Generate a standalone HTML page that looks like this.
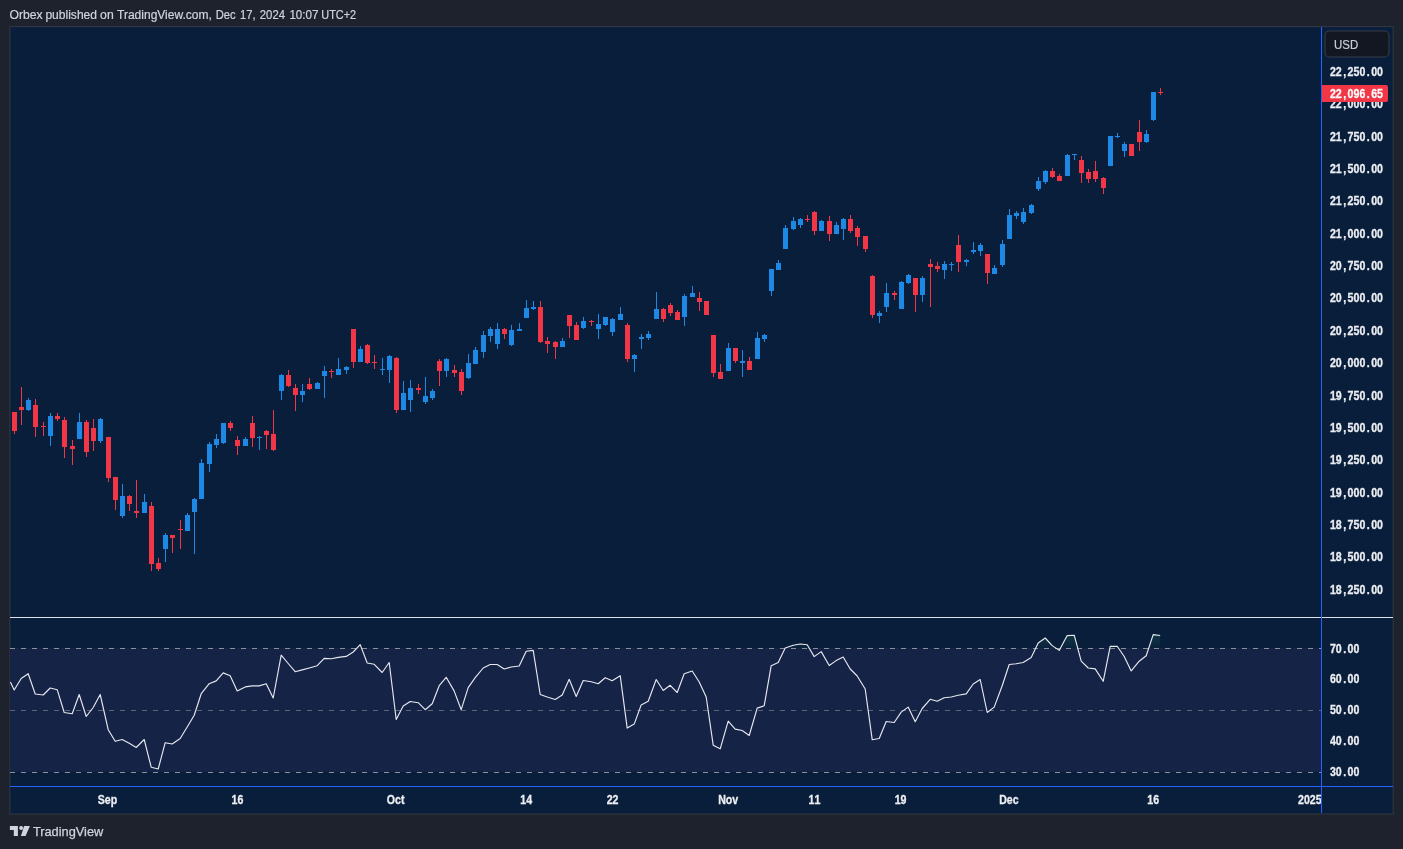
<!DOCTYPE html>
<html lang="en"><head><meta charset="utf-8"><title>Orbex published on TradingView.com</title>
<style>
html,body{margin:0;padding:0;background:#1e222d;}
body{width:1403px;height:849px;overflow:hidden;position:relative;font-family:"Liberation Sans", sans-serif;}
svg{position:absolute;left:0;top:0;display:block;will-change:transform;}
text{font-family:"Liberation Sans", sans-serif;}
.ax{font-size:12px;font-weight:bold;fill:#eceef2;stroke:#eceef2;stroke-width:0.3px;}
.tm{font-size:12px;font-weight:bold;fill:#eceef2;}
</style></head><body>
<svg width="1403" height="849" viewBox="0 0 1403 849">

<rect x="0" y="0" width="1403" height="849" fill="#1e222d"/>
<rect x="9.9" y="26.6" width="1383.25" height="787.4" fill="#091e3b" stroke="#343845" stroke-width="1"/>
<text y="18.8" font-size="12" fill="#d1d4dc" stroke="#d1d4dc" stroke-width="0.2"><tspan x="9.6" textLength="33.1" lengthAdjust="spacingAndGlyphs">Orbex</tspan> <tspan x="45.4" textLength="51.6" lengthAdjust="spacingAndGlyphs">published</tspan> <tspan x="100.1" textLength="13.6" lengthAdjust="spacingAndGlyphs">on</tspan> <tspan x="117.0" textLength="94.9" lengthAdjust="spacingAndGlyphs">TradingView.com,</tspan> <tspan x="215.7" textLength="19.9" lengthAdjust="spacingAndGlyphs">Dec</tspan> <tspan x="240.0" textLength="15.5" lengthAdjust="spacingAndGlyphs">17,</tspan> <tspan x="259.8" textLength="25.2" lengthAdjust="spacingAndGlyphs">2024</tspan> <tspan x="289.4" textLength="29.0" lengthAdjust="spacingAndGlyphs">10:07</tspan> <tspan x="321.3" textLength="34.9" lengthAdjust="spacingAndGlyphs">UTC+2</tspan></text>
<rect x="10" y="648" width="1311" height="124" fill="#152347"/>
<defs><linearGradient id="ob" x1="0" y1="632" x2="0" y2="648.5" gradientUnits="userSpaceOnUse"><stop offset="0" stop-color="#1f7a5c" stop-opacity="0.34"/><stop offset="1" stop-color="#1f7a5c" stop-opacity="0.02"/></linearGradient></defs>
<polygon fill="url(#ob)" points="356.3,648.5 360.0,644.6 361.5,648.5"/>
<polygon fill="url(#ob)" points="784.8,648.5 785.0,648.0 793.0,645.2 800.0,644.0 807.0,644.8 809.2,648.5"/>
<polygon fill="url(#ob)" points="1035.3,648.5 1038.0,643.0 1045.0,638.0 1052.0,645.6 1056.2,648.5"/>
<polygon fill="url(#ob)" points="1060.0,648.5 1067.0,635.6 1074.0,635.2 1077.6,648.5"/>
<polygon fill="url(#ob)" points="1109.6,648.5 1110.0,646.4 1117.0,646.2 1118.6,648.5"/>
<polygon fill="url(#ob)" points="1148.4,648.5 1153.0,634.6 1160.0,635.5 1160.0,648.5"/>
<line x1="10" y1="648.5" x2="1321" y2="648.5" stroke="#8b8f99" stroke-width="1" stroke-dasharray="5 6" shape-rendering="crispEdges"/>
<line x1="10" y1="710.5" x2="1321" y2="710.5" stroke="#5d6576" stroke-width="1" stroke-dasharray="5 6" shape-rendering="crispEdges"/>
<line x1="10" y1="772.5" x2="1321" y2="772.5" stroke="#8b8f99" stroke-width="1" stroke-dasharray="5 6" shape-rendering="crispEdges"/>
<polyline fill="none" stroke="#e6e8ee" stroke-width="1.15" stroke-linejoin="round" points="10.4,682.0 14.2,690.0 21.2,678.5 28.2,673.7 35.2,694.0 43.2,695.0 50.2,688.0 57.2,689.7 64.2,712.5 72.2,713.7 79.2,694.5 86.2,716.5 93.2,707.5 100.2,694.5 108.2,729.7 115.2,741.3 122.2,739.5 129.2,743.3 136.2,747.5 144.2,739.5 151.2,767.2 158.2,769.0 165.2,742.7 172.2,744.0 180.2,738.5 187.2,727.0 194.2,715.3 201.2,693.7 209.2,683.7 216.2,680.9 223.2,672.9 230.2,675.7 237.2,691.0 245.2,686.9 252.2,685.9 259.2,685.9 266.2,683.7 273.2,698.0 281.2,655.2 288.2,663.5 295.2,671.7 302.2,669.9 309.2,668.0 317.2,665.7 324.2,658.4 331.2,658.8 338.2,657.4 346.2,656.4 353.2,652.0 360.2,644.6 367.2,663.0 374.2,664.3 382.2,672.5 389.2,662.5 396.2,719.5 403.2,706.1 410.2,701.5 418.2,702.7 425.2,709.7 432.2,703.7 439.2,685.7 446.2,677.3 454.2,691.1 461.2,709.7 468.2,687.7 475.2,677.7 483.2,668.0 490.2,664.5 497.2,664.5 504.2,669.0 511.2,667.0 519.2,666.0 526.2,651.2 533.2,650.4 540.2,694.5 547.2,697.0 555.2,699.5 562.2,695.0 569.2,679.3 576.2,696.5 583.2,680.5 591.2,681.7 598.2,683.7 605.2,677.7 612.2,680.7 620.2,675.7 627.2,728.1 634.2,724.1 641.2,704.9 648.2,701.3 656.2,679.5 663.2,690.5 670.2,685.3 677.2,692.5 684.2,673.7 692.2,671.0 699.2,682.0 706.2,697.0 713.2,745.2 720.2,748.8 728.2,721.1 735.2,729.1 742.2,730.5 749.2,735.5 757.2,708.1 764.2,705.7 771.2,665.7 778.2,662.5 785.2,648.0 793.2,645.2 800.2,644.0 807.2,644.8 814.2,656.6 821.2,651.6 829.2,665.5 836.2,660.6 843.2,657.0 850.2,669.0 857.2,676.0 865.2,689.0 872.2,739.7 879.2,738.5 886.2,721.5 894.2,722.5 901.2,712.1 908.2,707.1 915.2,721.7 922.2,708.5 930.2,699.3 937.2,701.3 944.2,697.7 951.2,697.0 958.2,695.3 966.2,693.9 973.2,684.0 980.2,679.5 987.2,712.5 994.2,707.1 1002.2,685.7 1009.2,664.5 1016.2,663.7 1023.2,662.5 1031.2,657.4 1038.2,643.0 1045.2,638.0 1052.2,645.6 1059.2,650.4 1067.2,635.6 1074.2,635.2 1081.2,661.2 1088.2,668.0 1095.2,668.9 1103.2,681.3 1110.2,646.4 1117.2,646.2 1124.2,656.5 1131.2,670.9 1139.2,661.2 1146.2,655.8 1153.2,634.6 1160.2,635.5"/>
<g shape-rendering="crispEdges">
<rect x="14" y="412" width="1" height="22" fill="#f23645"/>
<rect x="12" y="412" width="5" height="19" fill="#f23645"/>
<rect x="21" y="387" width="1" height="38" fill="#f23645"/>
<rect x="19" y="407" width="5" height="3" fill="#f23645"/>
<rect x="28" y="398" width="1" height="13" fill="#1e88e5"/>
<rect x="26" y="400" width="5" height="10" fill="#1e88e5"/>
<rect x="35" y="399" width="1" height="38" fill="#f23645"/>
<rect x="33" y="405" width="5" height="22" fill="#f23645"/>
<rect x="43" y="422" width="1" height="14" fill="#f23645"/>
<rect x="41" y="426" width="5" height="1" fill="#f23645"/>
<rect x="50" y="413" width="1" height="33" fill="#1e88e5"/>
<rect x="48" y="416" width="5" height="20" fill="#1e88e5"/>
<rect x="57" y="413" width="1" height="8" fill="#f23645"/>
<rect x="55" y="416" width="5" height="3" fill="#f23645"/>
<rect x="64" y="417" width="1" height="41" fill="#f23645"/>
<rect x="62" y="420" width="5" height="27" fill="#f23645"/>
<rect x="72" y="440" width="1" height="25" fill="#f23645"/>
<rect x="70" y="446" width="5" height="3" fill="#f23645"/>
<rect x="79" y="413" width="1" height="26" fill="#1e88e5"/>
<rect x="77" y="422" width="5" height="17" fill="#1e88e5"/>
<rect x="86" y="420" width="1" height="37" fill="#f23645"/>
<rect x="84" y="422" width="5" height="30" fill="#f23645"/>
<rect x="93" y="419" width="1" height="32" fill="#f23645"/>
<rect x="91" y="428" width="5" height="13" fill="#f23645"/>
<rect x="100" y="418" width="1" height="25" fill="#1e88e5"/>
<rect x="98" y="419" width="5" height="22" fill="#1e88e5"/>
<rect x="108" y="437" width="1" height="45" fill="#f23645"/>
<rect x="106" y="437" width="5" height="41" fill="#f23645"/>
<rect x="115" y="477" width="1" height="33" fill="#f23645"/>
<rect x="113" y="477" width="5" height="23" fill="#f23645"/>
<rect x="122" y="484" width="1" height="34" fill="#1e88e5"/>
<rect x="120" y="496" width="5" height="20" fill="#1e88e5"/>
<rect x="129" y="495" width="1" height="16" fill="#f23645"/>
<rect x="127" y="496" width="5" height="8" fill="#f23645"/>
<rect x="136" y="480" width="1" height="38" fill="#f23645"/>
<rect x="134" y="511" width="5" height="2" fill="#f23645"/>
<rect x="144" y="494" width="1" height="19" fill="#1e88e5"/>
<rect x="142" y="502" width="5" height="11" fill="#1e88e5"/>
<rect x="151" y="502" width="1" height="69" fill="#f23645"/>
<rect x="149" y="506" width="5" height="58" fill="#f23645"/>
<rect x="158" y="558" width="1" height="13" fill="#f23645"/>
<rect x="156" y="563" width="5" height="6" fill="#f23645"/>
<rect x="165" y="533" width="1" height="29" fill="#1e88e5"/>
<rect x="163" y="535" width="5" height="14" fill="#1e88e5"/>
<rect x="172" y="535" width="1" height="18" fill="#f23645"/>
<rect x="170" y="535" width="5" height="3" fill="#f23645"/>
<rect x="180" y="520" width="1" height="29" fill="#f23645"/>
<rect x="178" y="529" width="5" height="1" fill="#f23645"/>
<rect x="187" y="513" width="1" height="18" fill="#1e88e5"/>
<rect x="185" y="515" width="5" height="16" fill="#1e88e5"/>
<rect x="194" y="498" width="1" height="56" fill="#1e88e5"/>
<rect x="192" y="499" width="5" height="13" fill="#1e88e5"/>
<rect x="201" y="459" width="1" height="40" fill="#1e88e5"/>
<rect x="199" y="463" width="5" height="36" fill="#1e88e5"/>
<rect x="209" y="442" width="1" height="30" fill="#1e88e5"/>
<rect x="207" y="444" width="5" height="20" fill="#1e88e5"/>
<rect x="216" y="434" width="1" height="14" fill="#1e88e5"/>
<rect x="214" y="439" width="5" height="6" fill="#1e88e5"/>
<rect x="223" y="423" width="1" height="21" fill="#1e88e5"/>
<rect x="221" y="423" width="5" height="20" fill="#1e88e5"/>
<rect x="230" y="421" width="1" height="10" fill="#f23645"/>
<rect x="228" y="423" width="5" height="5" fill="#f23645"/>
<rect x="237" y="436" width="1" height="19" fill="#f23645"/>
<rect x="235" y="440" width="5" height="6" fill="#f23645"/>
<rect x="245" y="437" width="1" height="9" fill="#1e88e5"/>
<rect x="243" y="439" width="5" height="7" fill="#1e88e5"/>
<rect x="252" y="416" width="1" height="31" fill="#f23645"/>
<rect x="250" y="423" width="5" height="15" fill="#f23645"/>
<rect x="259" y="436" width="1" height="14" fill="#1e88e5"/>
<rect x="257" y="437" width="5" height="1" fill="#1e88e5"/>
<rect x="266" y="430" width="1" height="19" fill="#f23645"/>
<rect x="264" y="431" width="5" height="4" fill="#f23645"/>
<rect x="273" y="410" width="1" height="41" fill="#f23645"/>
<rect x="271" y="434" width="5" height="16" fill="#f23645"/>
<rect x="281" y="374" width="1" height="26" fill="#1e88e5"/>
<rect x="279" y="375" width="5" height="16" fill="#1e88e5"/>
<rect x="288" y="370" width="1" height="17" fill="#f23645"/>
<rect x="286" y="375" width="5" height="11" fill="#f23645"/>
<rect x="295" y="384" width="1" height="27" fill="#f23645"/>
<rect x="293" y="388" width="5" height="7" fill="#f23645"/>
<rect x="302" y="384" width="1" height="18" fill="#1e88e5"/>
<rect x="300" y="391" width="5" height="4" fill="#1e88e5"/>
<rect x="309" y="378" width="1" height="12" fill="#f23645"/>
<rect x="307" y="384" width="5" height="5" fill="#f23645"/>
<rect x="317" y="382" width="1" height="7" fill="#1e88e5"/>
<rect x="315" y="383" width="5" height="6" fill="#1e88e5"/>
<rect x="324" y="366" width="1" height="32" fill="#1e88e5"/>
<rect x="322" y="371" width="5" height="5" fill="#1e88e5"/>
<rect x="331" y="369" width="1" height="9" fill="#f23645"/>
<rect x="329" y="371" width="5" height="1" fill="#f23645"/>
<rect x="338" y="358" width="1" height="17" fill="#1e88e5"/>
<rect x="336" y="369" width="5" height="6" fill="#1e88e5"/>
<rect x="346" y="366" width="1" height="8" fill="#1e88e5"/>
<rect x="344" y="367" width="5" height="3" fill="#1e88e5"/>
<rect x="353" y="329" width="1" height="39" fill="#f23645"/>
<rect x="351" y="329" width="5" height="33" fill="#f23645"/>
<rect x="360" y="346" width="1" height="16" fill="#1e88e5"/>
<rect x="358" y="349" width="5" height="13" fill="#1e88e5"/>
<rect x="367" y="344" width="1" height="20" fill="#f23645"/>
<rect x="365" y="345" width="5" height="18" fill="#f23645"/>
<rect x="374" y="355" width="1" height="14" fill="#f23645"/>
<rect x="372" y="362" width="5" height="1" fill="#f23645"/>
<rect x="382" y="358" width="1" height="17" fill="#1e88e5"/>
<rect x="380" y="369" width="5" height="1" fill="#1e88e5"/>
<rect x="389" y="355" width="1" height="28" fill="#1e88e5"/>
<rect x="387" y="356" width="5" height="14" fill="#1e88e5"/>
<rect x="396" y="357" width="1" height="56" fill="#f23645"/>
<rect x="394" y="358" width="5" height="52" fill="#f23645"/>
<rect x="403" y="381" width="1" height="29" fill="#1e88e5"/>
<rect x="401" y="393" width="5" height="17" fill="#1e88e5"/>
<rect x="410" y="380" width="1" height="32" fill="#1e88e5"/>
<rect x="408" y="388" width="5" height="12" fill="#1e88e5"/>
<rect x="418" y="384" width="1" height="10" fill="#f23645"/>
<rect x="416" y="388" width="5" height="2" fill="#f23645"/>
<rect x="425" y="377" width="1" height="27" fill="#1e88e5"/>
<rect x="423" y="396" width="5" height="6" fill="#1e88e5"/>
<rect x="432" y="389" width="1" height="11" fill="#1e88e5"/>
<rect x="430" y="391" width="5" height="7" fill="#1e88e5"/>
<rect x="439" y="359" width="1" height="27" fill="#f23645"/>
<rect x="437" y="361" width="5" height="10" fill="#f23645"/>
<rect x="446" y="358" width="1" height="19" fill="#1e88e5"/>
<rect x="444" y="359" width="5" height="12" fill="#1e88e5"/>
<rect x="454" y="365" width="1" height="12" fill="#f23645"/>
<rect x="452" y="370" width="5" height="3" fill="#f23645"/>
<rect x="461" y="369" width="1" height="26" fill="#f23645"/>
<rect x="459" y="372" width="5" height="19" fill="#f23645"/>
<rect x="468" y="354" width="1" height="25" fill="#1e88e5"/>
<rect x="466" y="363" width="5" height="15" fill="#1e88e5"/>
<rect x="475" y="347" width="1" height="17" fill="#1e88e5"/>
<rect x="473" y="350" width="5" height="14" fill="#1e88e5"/>
<rect x="483" y="331" width="1" height="27" fill="#1e88e5"/>
<rect x="481" y="335" width="5" height="17" fill="#1e88e5"/>
<rect x="490" y="327" width="1" height="15" fill="#1e88e5"/>
<rect x="488" y="329" width="5" height="7" fill="#1e88e5"/>
<rect x="497" y="323" width="1" height="26" fill="#1e88e5"/>
<rect x="495" y="329" width="5" height="15" fill="#1e88e5"/>
<rect x="504" y="328" width="1" height="11" fill="#f23645"/>
<rect x="502" y="329" width="5" height="5" fill="#f23645"/>
<rect x="511" y="325" width="1" height="21" fill="#1e88e5"/>
<rect x="509" y="330" width="5" height="15" fill="#1e88e5"/>
<rect x="519" y="323" width="1" height="8" fill="#1e88e5"/>
<rect x="517" y="329" width="5" height="2" fill="#1e88e5"/>
<rect x="526" y="300" width="1" height="18" fill="#1e88e5"/>
<rect x="524" y="308" width="5" height="10" fill="#1e88e5"/>
<rect x="533" y="301" width="1" height="9" fill="#1e88e5"/>
<rect x="531" y="307" width="5" height="2" fill="#1e88e5"/>
<rect x="540" y="301" width="1" height="42" fill="#f23645"/>
<rect x="538" y="307" width="5" height="35" fill="#f23645"/>
<rect x="547" y="337" width="1" height="16" fill="#f23645"/>
<rect x="545" y="341" width="5" height="3" fill="#f23645"/>
<rect x="555" y="341" width="1" height="18" fill="#f23645"/>
<rect x="553" y="342" width="5" height="5" fill="#f23645"/>
<rect x="562" y="338" width="1" height="9" fill="#1e88e5"/>
<rect x="560" y="341" width="5" height="6" fill="#1e88e5"/>
<rect x="569" y="315" width="1" height="23" fill="#f23645"/>
<rect x="567" y="315" width="5" height="11" fill="#f23645"/>
<rect x="576" y="322" width="1" height="18" fill="#f23645"/>
<rect x="574" y="325" width="5" height="15" fill="#f23645"/>
<rect x="583" y="317" width="1" height="12" fill="#1e88e5"/>
<rect x="581" y="321" width="5" height="7" fill="#1e88e5"/>
<rect x="591" y="320" width="1" height="6" fill="#f23645"/>
<rect x="589" y="321" width="5" height="1" fill="#f23645"/>
<rect x="598" y="314" width="1" height="25" fill="#1e88e5"/>
<rect x="596" y="324" width="5" height="5" fill="#1e88e5"/>
<rect x="605" y="317" width="1" height="9" fill="#1e88e5"/>
<rect x="603" y="317" width="5" height="8" fill="#1e88e5"/>
<rect x="612" y="318" width="1" height="18" fill="#1e88e5"/>
<rect x="610" y="319" width="5" height="13" fill="#1e88e5"/>
<rect x="620" y="307" width="1" height="13" fill="#1e88e5"/>
<rect x="618" y="314" width="5" height="6" fill="#1e88e5"/>
<rect x="627" y="323" width="1" height="39" fill="#f23645"/>
<rect x="625" y="325" width="5" height="34" fill="#f23645"/>
<rect x="634" y="354" width="1" height="18" fill="#1e88e5"/>
<rect x="632" y="355" width="5" height="4" fill="#1e88e5"/>
<rect x="641" y="334" width="1" height="15" fill="#1e88e5"/>
<rect x="639" y="337" width="5" height="2" fill="#1e88e5"/>
<rect x="648" y="331" width="1" height="9" fill="#1e88e5"/>
<rect x="646" y="334" width="5" height="4" fill="#1e88e5"/>
<rect x="656" y="292" width="1" height="27" fill="#1e88e5"/>
<rect x="654" y="309" width="5" height="10" fill="#1e88e5"/>
<rect x="663" y="308" width="1" height="14" fill="#f23645"/>
<rect x="661" y="309" width="5" height="10" fill="#f23645"/>
<rect x="670" y="303" width="1" height="13" fill="#f23645"/>
<rect x="668" y="305" width="5" height="8" fill="#f23645"/>
<rect x="677" y="310" width="1" height="10" fill="#f23645"/>
<rect x="675" y="312" width="5" height="8" fill="#f23645"/>
<rect x="684" y="294" width="1" height="32" fill="#1e88e5"/>
<rect x="682" y="296" width="5" height="21" fill="#1e88e5"/>
<rect x="692" y="286" width="1" height="11" fill="#1e88e5"/>
<rect x="690" y="293" width="5" height="4" fill="#1e88e5"/>
<rect x="699" y="292" width="1" height="19" fill="#f23645"/>
<rect x="697" y="298" width="5" height="4" fill="#f23645"/>
<rect x="706" y="301" width="1" height="14" fill="#f23645"/>
<rect x="704" y="301" width="5" height="14" fill="#f23645"/>
<rect x="713" y="335" width="1" height="42" fill="#f23645"/>
<rect x="711" y="335" width="5" height="38" fill="#f23645"/>
<rect x="720" y="364" width="1" height="15" fill="#f23645"/>
<rect x="718" y="372" width="5" height="7" fill="#f23645"/>
<rect x="728" y="343" width="1" height="28" fill="#1e88e5"/>
<rect x="726" y="348" width="5" height="23" fill="#1e88e5"/>
<rect x="735" y="348" width="1" height="15" fill="#f23645"/>
<rect x="733" y="348" width="5" height="13" fill="#f23645"/>
<rect x="742" y="350" width="1" height="27" fill="#1e88e5"/>
<rect x="740" y="361" width="5" height="2" fill="#1e88e5"/>
<rect x="749" y="357" width="1" height="13" fill="#f23645"/>
<rect x="747" y="361" width="5" height="9" fill="#f23645"/>
<rect x="757" y="332" width="1" height="27" fill="#1e88e5"/>
<rect x="755" y="338" width="5" height="21" fill="#1e88e5"/>
<rect x="764" y="334" width="1" height="8" fill="#1e88e5"/>
<rect x="762" y="335" width="5" height="4" fill="#1e88e5"/>
<rect x="771" y="269" width="1" height="27" fill="#1e88e5"/>
<rect x="769" y="269" width="5" height="22" fill="#1e88e5"/>
<rect x="778" y="260" width="1" height="10" fill="#1e88e5"/>
<rect x="776" y="263" width="5" height="7" fill="#1e88e5"/>
<rect x="785" y="225" width="1" height="24" fill="#1e88e5"/>
<rect x="783" y="228" width="5" height="21" fill="#1e88e5"/>
<rect x="793" y="217" width="1" height="13" fill="#1e88e5"/>
<rect x="791" y="221" width="5" height="8" fill="#1e88e5"/>
<rect x="800" y="218" width="1" height="10" fill="#1e88e5"/>
<rect x="798" y="219" width="5" height="6" fill="#1e88e5"/>
<rect x="807" y="215" width="1" height="7" fill="#f23645"/>
<rect x="805" y="219" width="5" height="1" fill="#f23645"/>
<rect x="814" y="211" width="1" height="24" fill="#f23645"/>
<rect x="812" y="212" width="5" height="19" fill="#f23645"/>
<rect x="821" y="220" width="1" height="11" fill="#1e88e5"/>
<rect x="819" y="221" width="5" height="10" fill="#1e88e5"/>
<rect x="829" y="216" width="1" height="25" fill="#f23645"/>
<rect x="827" y="221" width="5" height="13" fill="#f23645"/>
<rect x="836" y="222" width="1" height="12" fill="#1e88e5"/>
<rect x="834" y="225" width="5" height="9" fill="#1e88e5"/>
<rect x="843" y="218" width="1" height="22" fill="#1e88e5"/>
<rect x="841" y="219" width="5" height="10" fill="#1e88e5"/>
<rect x="850" y="215" width="1" height="18" fill="#f23645"/>
<rect x="848" y="219" width="5" height="12" fill="#f23645"/>
<rect x="857" y="226" width="1" height="20" fill="#f23645"/>
<rect x="855" y="228" width="5" height="9" fill="#f23645"/>
<rect x="865" y="236" width="1" height="16" fill="#f23645"/>
<rect x="863" y="236" width="5" height="13" fill="#f23645"/>
<rect x="872" y="275" width="1" height="43" fill="#f23645"/>
<rect x="870" y="276" width="5" height="39" fill="#f23645"/>
<rect x="879" y="311" width="1" height="12" fill="#1e88e5"/>
<rect x="877" y="313" width="5" height="3" fill="#1e88e5"/>
<rect x="886" y="283" width="1" height="29" fill="#1e88e5"/>
<rect x="884" y="293" width="5" height="14" fill="#1e88e5"/>
<rect x="894" y="291" width="1" height="9" fill="#f23645"/>
<rect x="892" y="293" width="5" height="2" fill="#f23645"/>
<rect x="901" y="281" width="1" height="28" fill="#1e88e5"/>
<rect x="899" y="282" width="5" height="27" fill="#1e88e5"/>
<rect x="908" y="274" width="1" height="10" fill="#1e88e5"/>
<rect x="906" y="275" width="5" height="8" fill="#1e88e5"/>
<rect x="915" y="278" width="1" height="34" fill="#f23645"/>
<rect x="913" y="278" width="5" height="17" fill="#f23645"/>
<rect x="922" y="276" width="1" height="26" fill="#1e88e5"/>
<rect x="920" y="278" width="5" height="17" fill="#1e88e5"/>
<rect x="930" y="259" width="1" height="48" fill="#f23645"/>
<rect x="928" y="264" width="5" height="3" fill="#f23645"/>
<rect x="937" y="262" width="1" height="10" fill="#f23645"/>
<rect x="935" y="266" width="5" height="3" fill="#f23645"/>
<rect x="944" y="261" width="1" height="18" fill="#1e88e5"/>
<rect x="942" y="264" width="5" height="6" fill="#1e88e5"/>
<rect x="951" y="262" width="1" height="9" fill="#1e88e5"/>
<rect x="949" y="264" width="5" height="1" fill="#1e88e5"/>
<rect x="958" y="235" width="1" height="37" fill="#f23645"/>
<rect x="956" y="245" width="5" height="17" fill="#f23645"/>
<rect x="966" y="259" width="1" height="7" fill="#1e88e5"/>
<rect x="964" y="260" width="5" height="2" fill="#1e88e5"/>
<rect x="973" y="242" width="1" height="12" fill="#1e88e5"/>
<rect x="971" y="250" width="5" height="2" fill="#1e88e5"/>
<rect x="980" y="243" width="1" height="13" fill="#1e88e5"/>
<rect x="978" y="245" width="5" height="6" fill="#1e88e5"/>
<rect x="987" y="254" width="1" height="30" fill="#f23645"/>
<rect x="985" y="254" width="5" height="19" fill="#f23645"/>
<rect x="994" y="265" width="1" height="9" fill="#1e88e5"/>
<rect x="992" y="268" width="5" height="6" fill="#1e88e5"/>
<rect x="1002" y="240" width="1" height="27" fill="#1e88e5"/>
<rect x="1000" y="244" width="5" height="21" fill="#1e88e5"/>
<rect x="1009" y="209" width="1" height="30" fill="#1e88e5"/>
<rect x="1007" y="215" width="5" height="24" fill="#1e88e5"/>
<rect x="1016" y="211" width="1" height="8" fill="#1e88e5"/>
<rect x="1014" y="213" width="5" height="3" fill="#1e88e5"/>
<rect x="1023" y="208" width="1" height="16" fill="#1e88e5"/>
<rect x="1021" y="212" width="5" height="10" fill="#1e88e5"/>
<rect x="1031" y="204" width="1" height="10" fill="#1e88e5"/>
<rect x="1029" y="205" width="5" height="8" fill="#1e88e5"/>
<rect x="1038" y="177" width="1" height="14" fill="#1e88e5"/>
<rect x="1036" y="181" width="5" height="8" fill="#1e88e5"/>
<rect x="1045" y="170" width="1" height="14" fill="#1e88e5"/>
<rect x="1043" y="171" width="5" height="11" fill="#1e88e5"/>
<rect x="1052" y="168" width="1" height="10" fill="#f23645"/>
<rect x="1050" y="171" width="5" height="6" fill="#f23645"/>
<rect x="1059" y="174" width="1" height="7" fill="#f23645"/>
<rect x="1057" y="176" width="5" height="5" fill="#f23645"/>
<rect x="1067" y="154" width="1" height="22" fill="#1e88e5"/>
<rect x="1065" y="155" width="5" height="21" fill="#1e88e5"/>
<rect x="1074" y="154" width="1" height="6" fill="#1e88e5"/>
<rect x="1072" y="154" width="5" height="1" fill="#1e88e5"/>
<rect x="1081" y="156" width="1" height="27" fill="#f23645"/>
<rect x="1079" y="160" width="5" height="13" fill="#f23645"/>
<rect x="1088" y="169" width="1" height="14" fill="#f23645"/>
<rect x="1086" y="172" width="5" height="7" fill="#f23645"/>
<rect x="1095" y="161" width="1" height="21" fill="#f23645"/>
<rect x="1093" y="171" width="5" height="8" fill="#f23645"/>
<rect x="1103" y="177" width="1" height="17" fill="#f23645"/>
<rect x="1101" y="178" width="5" height="10" fill="#f23645"/>
<rect x="1110" y="136" width="1" height="30" fill="#1e88e5"/>
<rect x="1108" y="136" width="5" height="30" fill="#1e88e5"/>
<rect x="1117" y="133" width="1" height="5" fill="#1e88e5"/>
<rect x="1115" y="136" width="5" height="1" fill="#1e88e5"/>
<rect x="1124" y="142" width="1" height="15" fill="#1e88e5"/>
<rect x="1122" y="144" width="5" height="7" fill="#1e88e5"/>
<rect x="1131" y="144" width="1" height="12" fill="#f23645"/>
<rect x="1129" y="144" width="5" height="12" fill="#f23645"/>
<rect x="1139" y="120" width="1" height="31" fill="#f23645"/>
<rect x="1137" y="132" width="5" height="10" fill="#f23645"/>
<rect x="1146" y="130" width="1" height="13" fill="#1e88e5"/>
<rect x="1144" y="134" width="5" height="8" fill="#1e88e5"/>
<rect x="1153" y="92" width="1" height="29" fill="#1e88e5"/>
<rect x="1151" y="92" width="5" height="28" fill="#1e88e5"/>
<rect x="1160" y="88" width="1" height="7" fill="#f23645"/>
<rect x="1158" y="92" width="5" height="1" fill="#f23645"/>
</g>
<g shape-rendering="crispEdges">
<rect x="10" y="617" width="1383" height="1" fill="#dfe2ea"/>
<rect x="1321" y="27" width="1" height="786" fill="#2962ff"/>
<rect x="10" y="786" width="1383" height="1" fill="#2962ff"/>
</g>
<text class="ax" transform="scale(0.885 1)" x="1502.71 1509.38 1517.71 1522.71 1529.38 1536.05 1544.38 1549.38 1556.05" y="75.9">22,250.00</text>
<text class="ax" transform="scale(0.885 1)" x="1502.71 1509.38 1517.71 1522.71 1529.38 1536.05 1544.38 1549.38 1556.05" y="108.3">22,000.00</text>
<text class="ax" transform="scale(0.885 1)" x="1502.71 1509.38 1517.71 1522.71 1529.38 1536.05 1544.38 1549.38 1556.05" y="140.7">21,750.00</text>
<text class="ax" transform="scale(0.885 1)" x="1502.71 1509.38 1517.71 1522.71 1529.38 1536.05 1544.38 1549.38 1556.05" y="173.0">21,500.00</text>
<text class="ax" transform="scale(0.885 1)" x="1502.71 1509.38 1517.71 1522.71 1529.38 1536.05 1544.38 1549.38 1556.05" y="205.4">21,250.00</text>
<text class="ax" transform="scale(0.885 1)" x="1502.71 1509.38 1517.71 1522.71 1529.38 1536.05 1544.38 1549.38 1556.05" y="237.8">21,000.00</text>
<text class="ax" transform="scale(0.885 1)" x="1502.71 1509.38 1517.71 1522.71 1529.38 1536.05 1544.38 1549.38 1556.05" y="270.1">20,750.00</text>
<text class="ax" transform="scale(0.885 1)" x="1502.71 1509.38 1517.71 1522.71 1529.38 1536.05 1544.38 1549.38 1556.05" y="302.5">20,500.00</text>
<text class="ax" transform="scale(0.885 1)" x="1502.71 1509.38 1517.71 1522.71 1529.38 1536.05 1544.38 1549.38 1556.05" y="334.9">20,250.00</text>
<text class="ax" transform="scale(0.885 1)" x="1502.71 1509.38 1517.71 1522.71 1529.38 1536.05 1544.38 1549.38 1556.05" y="367.3">20,000.00</text>
<text class="ax" transform="scale(0.885 1)" x="1502.71 1509.38 1517.71 1522.71 1529.38 1536.05 1544.38 1549.38 1556.05" y="399.6">19,750.00</text>
<text class="ax" transform="scale(0.885 1)" x="1502.71 1509.38 1517.71 1522.71 1529.38 1536.05 1544.38 1549.38 1556.05" y="432.0">19,500.00</text>
<text class="ax" transform="scale(0.885 1)" x="1502.71 1509.38 1517.71 1522.71 1529.38 1536.05 1544.38 1549.38 1556.05" y="464.4">19,250.00</text>
<text class="ax" transform="scale(0.885 1)" x="1502.71 1509.38 1517.71 1522.71 1529.38 1536.05 1544.38 1549.38 1556.05" y="496.8">19,000.00</text>
<text class="ax" transform="scale(0.885 1)" x="1502.71 1509.38 1517.71 1522.71 1529.38 1536.05 1544.38 1549.38 1556.05" y="529.1">18,750.00</text>
<text class="ax" transform="scale(0.885 1)" x="1502.71 1509.38 1517.71 1522.71 1529.38 1536.05 1544.38 1549.38 1556.05" y="561.5">18,500.00</text>
<text class="ax" transform="scale(0.885 1)" x="1502.71 1509.38 1517.71 1522.71 1529.38 1536.05 1544.38 1549.38 1556.05" y="593.9">18,250.00</text>
<text class="ax" transform="scale(0.885 1)" x="1502.71 1509.38 1517.71 1522.71 1529.38" y="652.6">70.00</text>
<text class="ax" transform="scale(0.885 1)" x="1502.71 1509.38 1517.71 1522.71 1529.38" y="683.4">60.00</text>
<text class="ax" transform="scale(0.885 1)" x="1502.71 1509.38 1517.71 1522.71 1529.38" y="714.2">50.00</text>
<text class="ax" transform="scale(0.885 1)" x="1502.71 1509.38 1517.71 1522.71 1529.38" y="745.0">40.00</text>
<text class="ax" transform="scale(0.885 1)" x="1502.71 1509.38 1517.71 1522.71 1529.38" y="775.8">30.00</text>
<path d="M1322 85 H1386 Q1388 85 1388 87 V100 Q1388 102 1386 102 H1322 Z" fill="#f23645"/>
<text class="ax" transform="scale(0.885 1)" x="1502.71 1509.38 1517.71 1522.71 1529.38 1536.05 1544.38 1549.38 1556.05" y="97.8" style="fill:#fff">22,096.65</text>
<rect x="1325" y="31" width="64" height="26" rx="4.5" ry="4.5" fill="#131722" stroke="#373b49" stroke-width="1.1"/>
<text x="1334.1" y="48.5" font-size="12" fill="#c9ccd6" stroke="#c9ccd6" stroke-width="0.2" textLength="24.2" lengthAdjust="spacingAndGlyphs">USD</text>
<text class="ax" transform="scale(0.885 1)" x="121.36" y="803.8" text-anchor="middle">Sep</text>
<text class="ax" transform="scale(0.885 1)" x="261.58 268.25" y="803.8">16</text>
<text class="ax" transform="scale(0.885 1)" x="447.01" y="803.8" text-anchor="middle">Oct</text>
<text class="ax" transform="scale(0.885 1)" x="587.91 594.58" y="803.8">14</text>
<text class="ax" transform="scale(0.885 1)" x="685.54 692.20" y="803.8">22</text>
<text class="ax" transform="scale(0.885 1)" x="822.82" y="803.8" text-anchor="middle">Nov</text>
<text class="ax" transform="scale(0.885 1)" x="913.56 920.23" y="803.8">11</text>
<text class="ax" transform="scale(0.885 1)" x="1010.96 1017.63" y="803.8">19</text>
<text class="ax" transform="scale(0.885 1)" x="1140.00" y="803.8" text-anchor="middle">Dec</text>
<text class="ax" transform="scale(0.885 1)" x="1296.38 1303.05" y="803.8">16</text>
<clipPath id="cl"><rect x="10" y="787" width="1311" height="26"/></clipPath>
<g clip-path="url(#cl)"><text class="ax" transform="scale(0.885 1)" x="1466.67 1473.33 1480.00 1486.67" y="803.8">2025</text></g>
<g fill="#d1d4dc"><path d="M9.9 826.1 H17.9 V836 H13.8 V830.1 H9.9 Z"/><circle cx="21.1" cy="828" r="2"/><path d="M24.1 826.1 H29.9 L25.6 836 H20.9 Z"/></g>
<text x="32.9" y="836" font-size="13" fill="#d1d4dc" stroke="#d1d4dc" stroke-width="0.25" textLength="70.4" lengthAdjust="spacingAndGlyphs">TradingView</text>
</svg></body></html>
